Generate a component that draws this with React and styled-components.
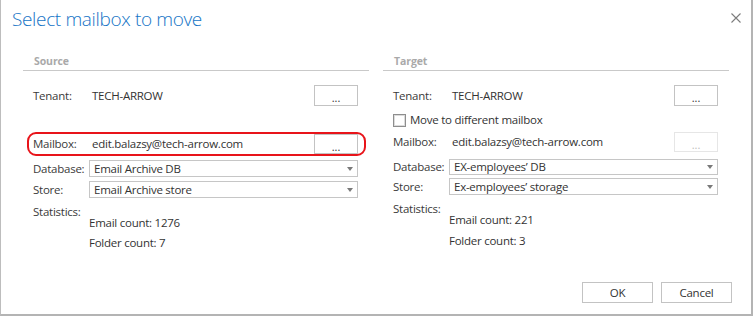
import React from "react";
import styled, { createGlobalStyle } from "styled-components";

const Global = createGlobalStyle`
  html, body { margin: 0; padding: 0; background: #fff; }
  body { font-family: "Open Sans", "Noto Sans", sans-serif; }
`;

const Dialog = styled.div`
  width: 753px;
  height: 316px;
  box-sizing: border-box;
  border-left: 1px solid #bdbdbd;
  border-right: 2px solid #b4b4b4;
  border-bottom: 2px solid #b4b4b4;
  display: flex;
  flex-direction: column;
  background: #fff;
  color: #3a3a3a;
  font-size: 11.5px;
  letter-spacing: -0.25px;
`;

const Header = styled.div`
  height: 46px;
  display: flex;
  justify-content: space-between;
  align-items: flex-start;
  padding: 6px 10px 0 11px;
  box-sizing: border-box;
`;

const Title = styled.h1`
  margin: 0;
  font-family: "Open Sans", "Noto Sans", sans-serif;
  font-weight: 300;
  font-size: 19px;
  line-height: 26px;
  color: #1574c6;
  letter-spacing: -0.35px;
`;

const Close = styled.button`
  margin-top: 7px;
  padding: 0;
  border: 0;
  background: transparent;
  width: 10px;
  height: 10px;
  display: flex;
`;

const Body = styled.div`
  flex: 1;
  display: grid;
  grid-template-columns: 1fr 1fr;
  column-gap: 14px;
  padding: 0 22px;
`;

const Section = styled.section`
  display: flex;
  flex-direction: column;
`;

const SectionTitle = styled.div`
  height: 25px;
  box-sizing: border-box;
  padding: 8px 0 0 11px;
  border-bottom: 1px solid #c9c9c9;
  font-weight: 700;
  font-size: 10.5px;
  line-height: 14px;
  color: #a9a9a9;
  letter-spacing: -0.1px;
`;

const Rows = styled.div`
  display: flex;
  flex-direction: column;
  padding: 0 11px 0 10px;
`;

const Row = styled.div`
  display: grid;
  grid-template-columns: 56px 1fr ${(p) => (p.$button ? "44px" : "")};
  align-items: center;
  height: ${(p) => p.$h}px;
  margin-top: ${(p) => p.$mt}px;
  line-height: 14px;
  white-space: nowrap;
`;

const Highlight = styled(Row)`
  border: 2px solid #e8141a;
  border-radius: 9px;
  margin-left: -6px;
  margin-right: -8px;
  padding: 0 6px 0 4px;
  box-sizing: border-box;
`;

const Label = styled.span`
  color: #3a3a3a;
`;

const Value = styled.span`
  padding-left: 3px;
  color: #333;
`;

const StatValue = styled.span`
  grid-column: 2;
  color: #333;
`;

const DotsButton = styled.button`
  height: 100%;
  box-sizing: border-box;
  border: 1px solid ${(p) => (p.disabled ? "#e6e6e6" : "#c3c3c3")};
  background: #fff;
  color: ${(p) => (p.disabled ? "#bdbdbd" : "#333")};
  font-family: inherit;
  font-size: 11px;
  line-height: 1;
  padding: 4px 0 0;
`;

const Select = styled.div`
  height: 100%;
  box-sizing: border-box;
  border: 1px solid #c6c6c6;
  display: flex;
  align-items: center;
  justify-content: space-between;
  padding: 0 4px 0 4px;
  color: #333;
`;

const Caret = styled.span`
  width: 0;
  height: 0;
  border-left: 3px solid transparent;
  border-right: 3px solid transparent;
  border-top: 4px solid #7a7a7a;
`;

const CheckRow = styled.label`
  display: flex;
  align-items: center;
  gap: 4px;
  height: ${(p) => p.$h}px;
  margin-top: ${(p) => p.$mt}px;
  color: #333;
  line-height: 14px;
`;

const CheckBox = styled.span`
  width: 13px;
  height: 13px;
  box-sizing: border-box;
  border: 1px solid #8e8e8e;
  box-shadow: inset 0 0 0 1px #dcdcdc;
  background: #fff;
`;

const Footer = styled.div`
  display: flex;
  justify-content: flex-end;
  gap: 8px;
  padding: 0 19px 11px 0;
`;

const DialogButton = styled.button`
  width: 71px;
  height: 21px;
  box-sizing: border-box;
  border: 1px solid #c3c3c3;
  background: #fff;
  color: #333;
  font-family: inherit;
  font-size: 11.5px;
  letter-spacing: inherit;
  padding: 0;
`;

const DropField = ({ children }) => (
  <Select>
    <span>{children}</span>
    <Caret />
  </Select>
);

export default function App() {
  return (
    <>
      <Global />
      <Dialog>
        <Header>
          <Title>Select mailbox to move</Title>
          <Close aria-label="Close">
            <svg width="10" height="10" viewBox="0 0 10 10">
              <path d="M0.5 0.5 L9.5 9.5 M9.5 0.5 L0.5 9.5" stroke="#7c7c7c" strokeWidth="1.1" />
            </svg>
          </Close>
        </Header>
        <Body>
          <Section>
            <SectionTitle>Source</SectionTitle>
            <Rows>
              <Row $button $mt={14} $h={21}>
                <Label>Tenant:</Label>
                <Value>TECH-ARROW</Value>
                <DotsButton>...</DotsButton>
              </Row>
              <Highlight $button $mt={26} $h={24}>
                <Label>Mailbox:</Label>
                <Value>edit.balazsy@tech-arrow.com</Value>
                <DotsButton>...</DotsButton>
              </Highlight>
              <Row $mt={4} $h={17}>
                <Label>Database:</Label>
                <DropField>Email Archive DB</DropField>
              </Row>
              <Row $mt={4} $h={17}>
                <Label>Store:</Label>
                <DropField>Email Archive store</DropField>
              </Row>
              <Row $mt={7} $h={10}>
                <Label>Statistics:</Label>
              </Row>
              <Row $mt={1} $h={10}>
                <StatValue>Email count: 1276</StatValue>
              </Row>
              <Row $mt={10} $h={10}>
                <StatValue>Folder count: 7</StatValue>
              </Row>
            </Rows>
          </Section>
          <Section>
            <SectionTitle>Target</SectionTitle>
            <Rows>
              <Row $button $mt={14} $h={21}>
                <Label>Tenant:</Label>
                <Value>TECH-ARROW</Value>
                <DotsButton>...</DotsButton>
              </Row>
              <CheckRow $mt={7} $h={14}>
                <CheckBox />
                <span>Move to different mailbox</span>
              </CheckRow>
              <Row $button $mt={5} $h={20}>
                <Label>Mailbox:</Label>
                <Value>edit.balazsy@tech-arrow.com</Value>
                <DotsButton disabled>...</DotsButton>
              </Row>
              <Row $mt={7} $h={16}>
                <Label>Database:</Label>
                <DropField>EX-employees’ DB</DropField>
              </Row>
              <Row $mt={3} $h={17}>
                <Label>Store:</Label>
                <DropField>Ex-employees’ storage</DropField>
              </Row>
              <Row $mt={7} $h={10}>
                <Label>Statistics:</Label>
              </Row>
              <Row $mt={1} $h={10}>
                <StatValue>Email count: 221</StatValue>
              </Row>
              <Row $mt={11} $h={10}>
                <StatValue>Folder count: 3</StatValue>
              </Row>
            </Rows>
          </Section>
        </Body>
        <Footer>
          <DialogButton>OK</DialogButton>
          <DialogButton>Cancel</DialogButton>
        </Footer>
      </Dialog>
    </>
  );
}
